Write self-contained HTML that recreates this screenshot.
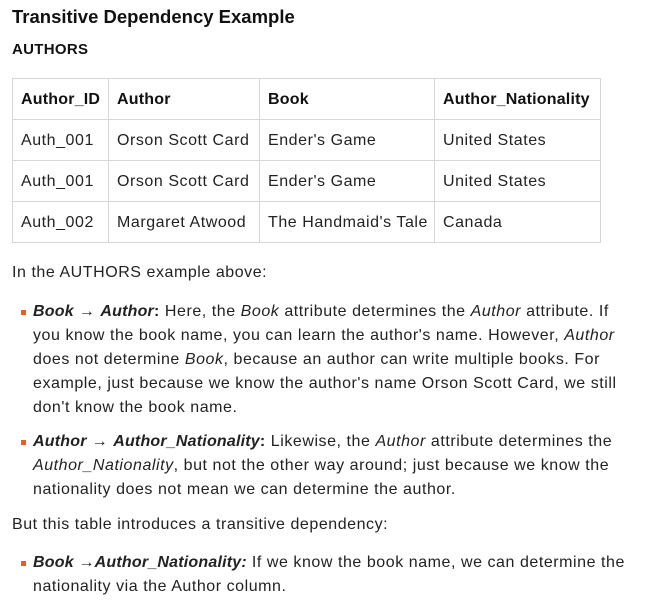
<!DOCTYPE html>
<html><head><style>
body{margin:0;background:#fff;font-family:"Liberation Sans",sans-serif;color:#1a1a1a;width:655px;height:612px;overflow:hidden;position:relative}
h1{position:absolute;left:12px;top:6px;margin:0;font-size:18.5px;font-weight:bold;color:#111}
h2{position:absolute;left:12px;top:41px;margin:0;font-size:15px;font-weight:bold;color:#111;letter-spacing:0.3px}
table{position:absolute;left:12px;top:78px;border-collapse:collapse;font-size:16px;color:#222;letter-spacing:0.55px;table-layout:fixed;width:588px}
td,th{border:1px solid #d6d6d6;height:40px;padding:2px 8px 0;text-align:left;white-space:nowrap;box-sizing:border-box;overflow:visible}
th{font-weight:bold;color:#111;letter-spacing:0.2px}
p{position:absolute;left:12px;margin:0;font-size:16px;line-height:24px;color:#222;letter-spacing:0.55px;white-space:nowrap}
.li{position:absolute;left:33px;margin:0;font-size:16px;line-height:24px;color:#222;white-space:nowrap;letter-spacing:0.55px}
.sq{position:absolute;left:21px;width:5px;height:5px;background:#f05a22}
b i,i b{font-weight:bold;letter-spacing:0.2px}
</style></head><body>
<h1>Transitive Dependency Example</h1>
<h2>AUTHORS</h2>
<table>
<colgroup><col style="width:96px"><col style="width:151px"><col style="width:175px"><col style="width:166px"></colgroup>
<tr style="height:41px"><th>Author_ID</th><th>Author</th><th>Book</th><th>Author_Nationality</th></tr>
<tr style="height:41px"><td>Auth_001</td><td>Orson Scott Card</td><td>Ender's Game</td><td>United States</td></tr>
<tr style="height:41px"><td>Auth_001</td><td>Orson Scott Card</td><td>Ender's Game</td><td>United States</td></tr>
<tr style="height:41px"><td>Auth_002</td><td>Margaret Atwood</td><td>The Handmaid's Tale</td><td>Canada</td></tr>
</table>
<p style="top:261px">In the AUTHORS example above:</p>
<div class="sq" style="top:310px"></div>
<div class="li" style="top:300px"><b><i>Book</i> → <i>Author</i>:</b> Here, the <i>Book</i> attribute determines the <i>Author</i> attribute. If<br>you know the book name, you can learn the author's name. However, <i>Author</i><br>does not determine <i>Book</i>, because an author can write multiple books. For<br>example, just because we know the author's name Orson Scott Card, we still<br>don't know the book name.</div>
<div class="sq" style="top:440px"></div>
<div class="li" style="top:430px"><b><i>Author</i> → <i>Author_Nationality</i>:</b> Likewise, the <i>Author</i> attribute determines the<br><i>Author_Nationality</i>, but not the other way around; just because we know the<br>nationality does not mean we can determine the author.</div>
<p style="top:513px">But this table introduces a transitive dependency:</p>
<div class="sq" style="top:561px"></div>
<div class="li" style="top:551px"><b><i>Book →Author_Nationality:</i></b> If we know the book name, we can determine the<br>nationality via the Author column.</div>
</body></html>
